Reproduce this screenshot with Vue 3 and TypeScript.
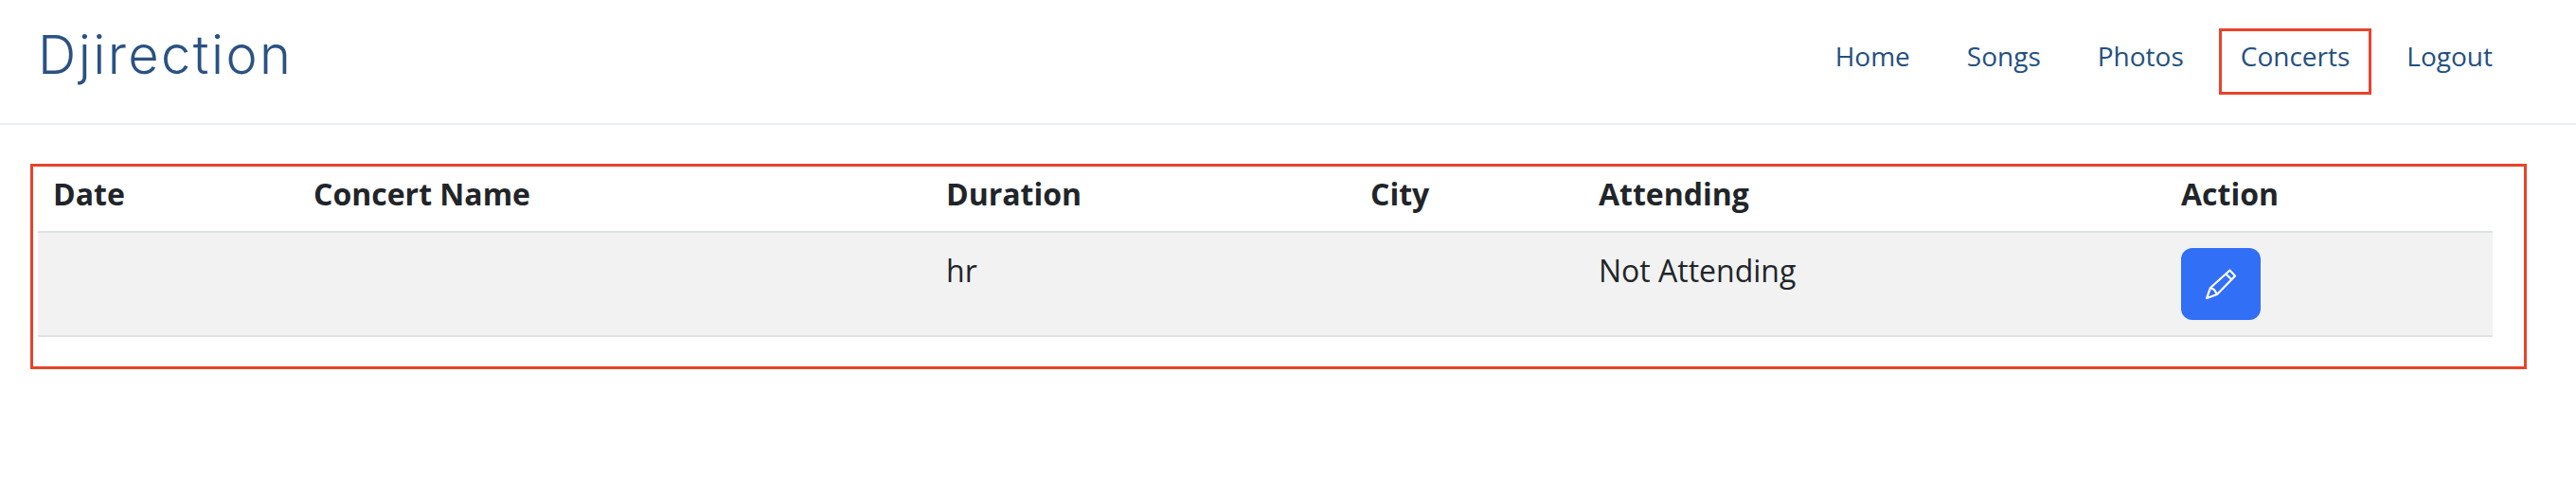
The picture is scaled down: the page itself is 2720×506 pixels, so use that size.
<script setup lang="ts">
const links = ['Home', 'Songs', 'Photos', 'Concerts', 'Logout']
const columns = [
  { label: 'Date', width: 275 },
  { label: 'Concert Name', width: 668 },
  { label: 'Duration', width: 448 },
  { label: 'City', width: 241 },
  { label: 'Attending', width: 615 },
  { label: 'Action', width: 345 },
]
</script>

<template>
  <div class="page">
    <header class="navbar">
      <a class="brand">Djirection</a>
      <nav class="nav">
        <a v-for="link in links" :key="link" class="nav-link" :class="{ marked: link === 'Concerts' }">{{ link }}</a>
      </nav>
    </header>

    <section class="marked-box">
      <table class="table">
        <colgroup>
          <col v-for="c in columns" :key="c.label" :style="{ width: `${c.width}px` }" />
        </colgroup>
        <thead>
          <tr>
            <th v-for="c in columns" :key="c.label">{{ c.label }}</th>
          </tr>
        </thead>
        <tbody>
          <tr>
            <td></td>
            <td></td>
            <td>hr</td>
            <td></td>
            <td>Not Attending</td>
            <td>
              <button class="edit-btn" type="button" aria-label="Edit">
                <svg width="32" height="32" viewBox="0 0 32 32" fill="none" stroke="#fff" stroke-width="2.2" stroke-linejoin="round">
                  <path d="M1 31 L5 20 L25.5 1.5 L31 7.5 L12 27 Z" />
                  <path d="M21.5 5.5 L27.5 11.5" />
                  <path d="M5 20 L9 22 L12 27" />
                </svg>
              </button>
            </td>
          </tr>
        </tbody>
      </table>
    </section>
  </div>
</template>

<style>
html,
body {
  background: #fff;
}
</style>

<style scoped>
.page {
  width: 2720px;
  height: 506px;
  overflow: hidden;
  background: #fff;
  font-family: 'Open Sans', 'Liberation Sans', sans-serif;
}

.navbar {
  display: flex;
  align-items: center;
  justify-content: space-between;
  height: 130px;
  padding: 0 65px 0 40px;
  box-sizing: content-box;
  border-bottom: 2px solid #e6f0fa;
}

.brand {
  padding-bottom: 15px;
  font-family: Inter, 'Noto Sans', sans-serif;
  font-weight: 350;
  font-size: 56px;
  line-height: 1;
  letter-spacing: 2.4px;
  color: #2a5282;
}

.nav {
  display: flex;
  align-items: center;
  gap: 14px;
}

.nav-link {
  display: block;
  padding: 6px 20px 18px;
  border: 3px solid transparent;
  font-size: 28px;
  line-height: 40px;
  color: #24507f;
}

.nav-link.marked {
  border-color: #e8432a;
}

.marked-box {
  margin: 41px 52px 0 32px;
  padding: 0 33px 31px 5px;
  border: 3px solid #e8432a;
}

.table {
  width: 100%;
  table-layout: fixed;
  border-collapse: collapse;
  font-size: 32px;
  line-height: 48px;
  color: #212529;
}

th {
  padding: 5px 16px 15px;
  text-align: left;
  font-weight: 700;
  border-bottom: 2px solid #dee2e6;
}

td {
  padding: 16px;
  vertical-align: top;
  background: #f2f2f2;
  border-bottom: 2px solid #dee2e6;
}

.edit-btn {
  display: flex;
  align-items: center;
  justify-content: center;
  width: 84px;
  height: 76px;
  padding: 0;
  border: 0;
  border-radius: 12px;
  background: #316ff6;
}
</style>
